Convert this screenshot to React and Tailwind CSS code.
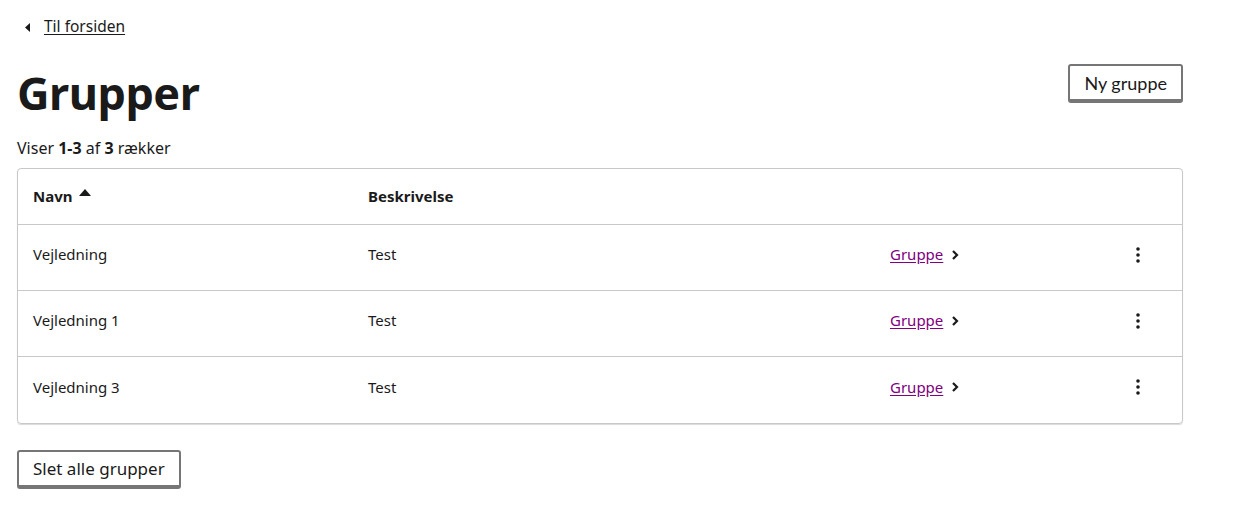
import React from 'react';

const rows = [
  { name: 'Vejledning', desc: 'Test' },
  { name: 'Vejledning 1', desc: 'Test' },
  { name: 'Vejledning 3', desc: 'Test' },
];

const Kebab = () => (
  <svg width="4" height="16" viewBox="0 0 4 16" fill="#1a1a1a">
    <circle cx="2" cy="2" r="1.8" />
    <circle cx="2" cy="8" r="1.8" />
    <circle cx="2" cy="14" r="1.8" />
  </svg>
);

const Chevron = () => (
  <svg width="8" height="12" viewBox="0 0 8 12" fill="none" stroke="#1a1a1a" strokeWidth="2.2">
    <path d="M2 2l4 4-4 4" />
  </svg>
);

export default function App() {
  return (
    <div className="min-h-screen bg-white text-[#1a1a1a] font-['Noto_Sans',sans-serif]">
      <div className="w-[1166px] ml-[17px] pt-[17px]">
        {/* Back link */}
        <div className="flex items-center h-[20px] text-[15.5px]">
          <svg width="6" height="9" viewBox="0 0 6 9" className="ml-[8px] mr-[13px]" fill="#1a1a1a">
            <path d="M5 0v9L0 4.5z" />
          </svg>
          <a href="#" className="underline underline-offset-2 text-[#1a1a1a]">Til forsiden</a>
        </div>

        {/* Title row */}
        <div className="flex items-start justify-between mt-[28px]">
          <h1 className="text-[45px] leading-[56px] font-bold tracking-[-0.5px]">Grupper</h1>
          <button className="-mt-[1px] h-[39px] px-[14px] border-2 border-b-4 border-[#767676] rounded-[3px] bg-white text-[18px] font-['Lato',sans-serif] leading-none">
            Ny gruppe
          </button>
        </div>

        <p className="mt-[17px] text-[16px] leading-[20px]">
          Viser <b>1-3</b> af <b>3</b> rækker
        </p>

        {/* Table */}
        <div className="mt-[10px] border border-[#c8c8c8] rounded-[4px] shadow-[0_1px_1px_rgba(0,0,0,0.15)]">
          <div className="grid grid-cols-[335px_522px_246px_1fr] h-[56px] items-center border-b border-[#c8c8c8] px-[15px] text-[15px] font-bold">
            <div className="flex items-center gap-[6px]">
              Navn
              <svg width="12" height="7" viewBox="0 0 12 7" fill="#1a1a1a" className="-mt-[8px]"><path d="M0 7L6 0l6 7z" /></svg>
            </div>
            <div>Beskrivelse</div>
            <div />
            <div />
          </div>
          {rows.map((r, i) => (
            <div
              key={r.name}
              className={`grid grid-cols-[335px_522px_246px_1fr] h-[66px] items-center px-[15px] pb-[6px] text-[15px] ${i < rows.length - 1 ? 'border-b border-[#c8c8c8]' : ''}`}
            >
              <div>{r.name}</div>
              <div>{r.desc}</div>
              <div className="flex items-center gap-[8px]">
                <a href="#" className="underline underline-offset-2 text-[#800080]">Gruppe</a>
                <Chevron />
              </div>
              <div className="flex"><Kebab /></div>
            </div>
          ))}
        </div>

        <button className="mt-[26px] h-[39px] px-[14px] border-2 border-b-4 border-[#767676] rounded-[3px] bg-white text-[17px] leading-none">
          Slet alle grupper
        </button>
      </div>
    </div>
  );
}
